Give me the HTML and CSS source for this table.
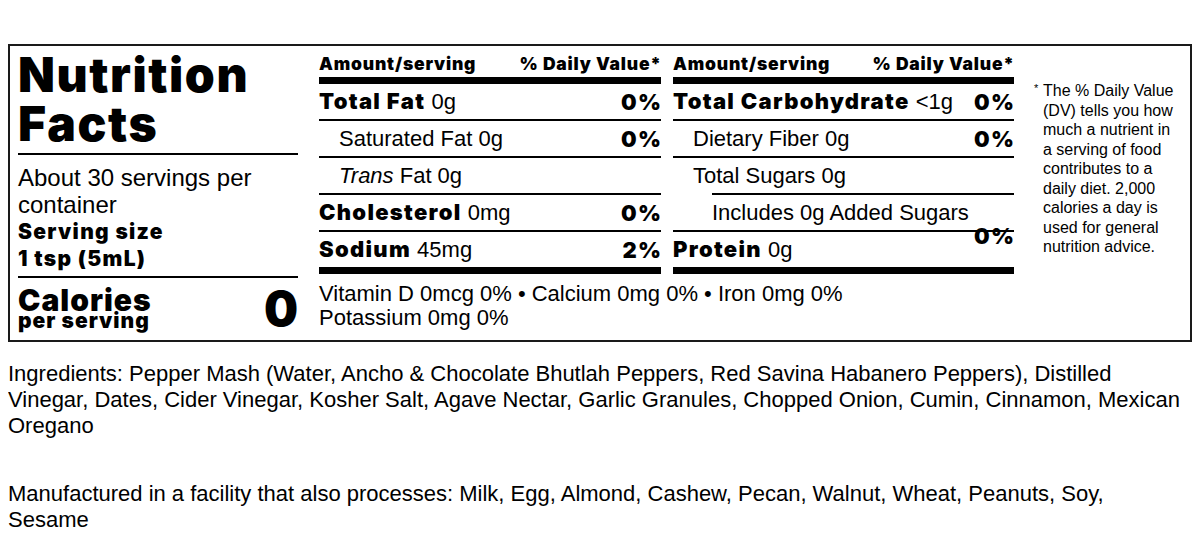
FILE: index.html
```html
<!DOCTYPE html>
<html lang="en">
<head>
<meta charset="utf-8">
<title>Nutrition Facts</title>
<link rel="stylesheet" href="styles.css">
</head>
<body>
<div class="label">
  <div class="col-left">
    <h1 class="title">Nutrition<br>Facts</h1>
    <div class="servings">
      <div class="per-container">About 30 servings per container</div>
      <div class="serving-size">Serving size<br>1 tsp (5mL)</div>
    </div>
    <div class="calories">
      <div class="cal-label">
        <div class="cal-word">Calories</div>
        <div class="cal-sub">per serving</div>
      </div>
      <div class="cal-value">0</div>
    </div>
  </div>

  <div class="col-nutrients">
    <div class="tables">
      <div class="table">
        <div class="thead"><span>Amount/serving</span><span>% Daily Value*</span></div>
        <div class="row"><span><b>Total Fat</b> 0g</span><b class="pct">0%</b></div>
        <div class="row sub"><span>Saturated Fat 0g</span><b class="pct">0%</b></div>
        <div class="row sub"><span><i>Trans</i> Fat 0g</span></div>
        <div class="row"><span><b>Cholesterol</b> 0mg</span><b class="pct">0%</b></div>
        <div class="row last"><span><b>Sodium</b> 45mg</span><b class="pct">2%</b></div>
      </div>
      <div class="table">
        <div class="thead"><span>Amount/serving</span><span>% Daily Value*</span></div>
        <div class="row"><span><b>Total Carbohydrate</b> &lt;1g</span><b class="pct">0%</b></div>
        <div class="row sub"><span>Dietary Fiber 0g</span><b class="pct">0%</b></div>
        <div class="row sub noline"><span>Total Sugars 0g</span></div>
        <div class="rule-inset"></div>
        <div class="row sub2"><span>Includes 0g Added Sugars</span><b class="pct low">0%</b></div>
        <div class="row last"><span><b>Protein</b> 0g</span></div>
      </div>
    </div>
    <div class="vitamins">Vitamin D 0mcg 0% • Calcium 0mg 0% • Iron 0mg 0%<br>Potassium 0mg 0%</div>
  </div>

  <div class="footnote">
    <span class="star">*</span>
    <p>The % Daily Value (DV) tells you how much a nutrient in a serving of food contributes to a daily diet. 2,000 calories a day is used for general nutrition advice.</p>
  </div>
</div>

<div class="notes">
  <p class="ingredients">Ingredients: Pepper Mash (Water, Ancho &amp; Chocolate Bhutlah Peppers, Red Savina Habanero Peppers), Distilled Vinegar, Dates, Cider Vinegar, Kosher Salt, Agave Nectar, Garlic Granules, Chopped Onion, Cumin, Cinnamon, Mexican Oregano</p>
  <p class="allergens">Manufactured in a facility that also processes: Milk, Egg, Almond, Cashew, Pecan, Walnut, Wheat, Peanuts, Soy, Sesame</p>
</div>
</body>
</html>
```

FILE: styles.css
```css
* { box-sizing: border-box; }

body {
  margin: 8px;
  background: #fff;
  color: #000;
  font-family: "Liberation Sans", Arial, sans-serif;
}

.label {
  margin-top: 36px;
  border: 2px solid #1a1a1a;
  height: 298px;
  padding: 4px 8px 0 8px;
  display: flex;
  align-items: flex-start;
}

/* heavy font */
.title, .serving-size, .cal-word, .cal-sub, .cal-value, .thead, b {
  font-family: Inter, "Liberation Sans", sans-serif;
  font-weight: 900;
}

.col-left {
  width: 280px;
  flex: none;
}

.title {
  margin: 0;
  font-size: 48px;
  line-height: 49px;
  letter-spacing: 1.6px;
  padding-bottom: 5px;
  border-bottom: 2px solid #000;
}

.servings {
  padding: 9px 0 4px;
  border-bottom: 2px solid #000;
}

.per-container {
  font-size: 24px;
  line-height: 27px;
  padding-right: 20px;
}

.serving-size {
  font-size: 21px;
  line-height: 27px;
  letter-spacing: 1.3px;
}

.calories {
  display: flex;
  justify-content: space-between;
  align-items: center;
  padding-top: 10px;
}

.cal-word {
  font-size: 30px;
  line-height: 24px;
  letter-spacing: 1px;
}

.cal-sub {
  font-size: 21px;
  line-height: 18px;
  letter-spacing: 1px;
}

.cal-value {
  font-size: 48px;
  line-height: 42px;
}

.col-nutrients {
  margin-left: 21px;
  flex: none;
}

.tables {
  display: grid;
  grid-template-columns: 342px 341px;
  column-gap: 12px;
}

.thead {
  display: flex;
  justify-content: space-between;
  font-size: 17.5px;
  line-height: 20px;
  letter-spacing: 0.8px;
  padding-top: 4px;
  padding-bottom: 3px;
  border-bottom: 7px solid #000;
}

.thead span:last-child { margin-right: -0.8px; }

.row {
  display: flex;
  justify-content: space-between;
  align-items: center;
  height: 37px;
  font-size: 22px;
  border-bottom: 2px solid #000;
}

.row b {
  font-size: 22px;
  letter-spacing: 1.3px;
}

.row .pct { margin-right: -1.3px; }

.row.sub { padding-left: 20px; }
.row.sub2 { padding-left: 39px; }
.row.noline { border-bottom: 0; height: 35px; }

.rule-inset {
  margin-left: 39px;
  height: 2px;
  background: #000;
}

.row.last {
  border-bottom: 7px solid #000;
  height: 42px;
}

.pct.low {
  align-self: flex-end;
  line-height: 20px;
  margin-bottom: -16px;
}

.vitamins {
  font-size: 22px;
  line-height: 24px;
  padding-top: 8px;
}

.footnote {
  margin-left: 16px;
  margin-top: 31px;
  display: flex;
  font-size: 16px;
  line-height: 19.5px;
}

.star {
  font-size: 11px;
  line-height: 14px;
  width: 13px;
  flex: none;
  padding-left: 4px;
}

.footnote p {
  margin: 0;
  width: 140px;
}

.notes {
  font-size: 22px;
  line-height: 26px;
  padding-right: 6px;
}

.ingredients {
  margin: 19px 0 0;
}

.allergens {
  margin: 42px 0 0;
}
```
